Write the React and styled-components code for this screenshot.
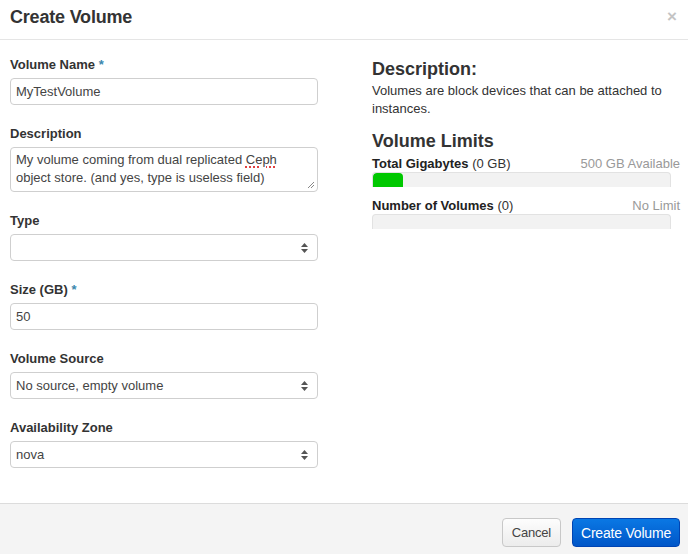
import React from 'react';
import styled, { createGlobalStyle } from 'styled-components';

const Global = createGlobalStyle`
  html, body {
    margin: 0;
    padding: 0;
    background: #fff;
  }
  body {
    font-family: "Liberation Sans", Arial, sans-serif;
    color: #333;
  }
`;

const Modal = styled.div`
  width: 688px;
  height: 554px;
  display: flex;
  flex-direction: column;
  background: #fff;
`;

const Header = styled.div`
  height: 39px;
  border-bottom: 1px solid #e5e5e5;
  display: flex;
  align-items: center;
  justify-content: space-between;
  padding: 0 10px;
  h3 {
    margin: 0;
    font-size: 18px;
    font-weight: bold;
    color: #333;
    letter-spacing: -0.2px;
    margin-top: -4px;
  }
`;

const Close = styled.span`
  color: #c4c4c4;
  font-size: 17px;
  font-weight: bold;
  margin-right: 1px;
  margin-top: -5px;
`;

const Body = styled.div`
  flex: 1;
  display: grid;
  grid-template-columns: 308px 308px;
  column-gap: 54px;
  padding: 17px 8px 0 10px;
  align-items: start;
`;

const Field = styled.div`
  display: flex;
  flex-direction: column;
  margin-bottom: 21px;
`;

const Label = styled.label`
  font-size: 13px;
  font-weight: bold;
  line-height: 15px;
  margin-bottom: 6px;
  color: #333;
  span {
    color: #3a87ad;
  }
`;

const Input = styled.div`
  box-sizing: border-box;
  height: 27px;
  border: 1px solid #cfcfcf;
  border-radius: 4px;
  padding: 0 5px;
  font-size: 13px;
  line-height: 25px;
  color: #444;
  position: relative;
`;

const TextArea = styled(Input)`
  height: 45px;
  line-height: 18px;
  padding: 3px 5px;
  em {
    font-style: normal;
    text-decoration: underline dotted #e04040;
    text-decoration-thickness: 2px;
    text-underline-offset: 2px;
  }
`;

const Grip = styled.svg`
  position: absolute;
  right: 2px;
  bottom: 2px;
`;

const Arrows = styled.svg`
  position: absolute;
  right: 9px;
  top: 8px;
`;

const Side = styled.div`
  display: flex;
  flex-direction: column;
  padding-top: 1px;
  h4 {
    margin: 0;
    font-size: 18px;
    font-weight: bold;
    line-height: 22px;
    color: #333;
  }
  p {
    margin: 2px 0 0;
    font-size: 13px;
    line-height: 18px;
    color: #333;
  }
`;

const LimitsTitle = styled.h4`
  && {
    margin-top: 12px;
  }
`;

const QuotaRow = styled.div`
  display: flex;
  justify-content: space-between;
  font-size: 13px;
  line-height: 15px;
  margin-top: ${p => p.$top}px;
  b {
    color: #222;
  }
  span.avail {
    color: #999;
  }
`;

const Bar = styled.div`
  margin-top: 1px;
  margin-right: 9px;
  height: 15px;
  box-sizing: border-box;
  border: 1px solid #e2e2e2;
  border-bottom: none;
  border-radius: 4px 4px 0 0;
  background: #f2f2f2;
  overflow: hidden;
`;

const Fill = styled.div`
  height: 100%;
  background: #00c800;
  border-radius: 4px 4px 0 0;
`;

const Footer = styled.div`
  height: 51px;
  border-top: 1px solid #dcdcdc;
  background: #f4f4f4;
  display: flex;
  justify-content: flex-end;
  align-items: flex-start;
  padding: 14px 8px 0 0;
  box-sizing: border-box;
  gap: 11px;
`;

const Button = styled.button`
  height: 29px;
  box-sizing: border-box;
  border-radius: 4px;
  font-family: "Liberation Sans", Arial, sans-serif;
  font-size: ${p => (p.$primary ? '14px' : '13px')};
  padding: 0 ${p => (p.$primary ? '8px' : '9px')};
  border: 1px solid ${p => (p.$primary ? '#0044b3' : '#c8c8c8')};
  color: ${p => (p.$primary ? '#fff' : '#444')};
  background: ${p =>
    p.$primary
      ? 'linear-gradient(#0a78e4, #0056c8)'
      : 'linear-gradient(#fdfdfd, #ececec)'};
  letter-spacing: -0.2px;
`;

const SelectArrows = () => (
  <Arrows width="7" height="10" viewBox="0 0 7 10">
    <path d="M3.5 0 L7 4 H0 Z" fill="#555" />
    <path d="M3.5 10 L7 6 H0 Z" fill="#555" />
  </Arrows>
);

const Select = ({ children }) => (
  <Input>
    {children}
    <SelectArrows />
  </Input>
);

export default function App() {
  return (
    <Modal>
      <Global />
      <Header>
        <h3>Create Volume</h3>
        <Close>×</Close>
      </Header>
      <Body>
        <div>
          <Field>
            <Label>
              Volume Name <span>*</span>
            </Label>
            <Input>MyTestVolume</Input>
          </Field>
          <Field>
            <Label>Description</Label>
            <TextArea>
              My volume coming from dual replicated <em>Ceph</em>
              <br />
              object store. (and yes, type is useless field)
              <Grip width="8" height="8" viewBox="0 0 8 8">
                <path d="M1 7 L7 1 M4 7 L7 4" stroke="#888" strokeWidth="1" />
              </Grip>
            </TextArea>
          </Field>
          <Field>
            <Label>Type</Label>
            <Select />
          </Field>
          <Field>
            <Label>
              Size (GB) <span>*</span>
            </Label>
            <Input>50</Input>
          </Field>
          <Field>
            <Label>Volume Source</Label>
            <Select>No source, empty volume</Select>
          </Field>
          <Field>
            <Label>Availability Zone</Label>
            <Select>nova</Select>
          </Field>
        </div>
        <Side>
          <h4>Description:</h4>
          <p>
            Volumes are block devices that can be attached to
            <br />
            instances.
          </p>
          <LimitsTitle>Volume Limits</LimitsTitle>
          <QuotaRow $top={4}>
            <span>
              <b>Total Gigabytes</b> (0 GB)
            </span>
            <span className="avail">500 GB Available</span>
          </QuotaRow>
          <Bar>
            <Fill style={{ width: '10%' }} />
          </Bar>
          <QuotaRow $top={11}>
            <span>
              <b>Number of Volumes</b> (0)
            </span>
            <span className="avail">No Limit</span>
          </QuotaRow>
          <Bar />
        </Side>
      </Body>
      <Footer>
        <Button>Cancel</Button>
        <Button $primary>Create Volume</Button>
      </Footer>
    </Modal>
  );
}
